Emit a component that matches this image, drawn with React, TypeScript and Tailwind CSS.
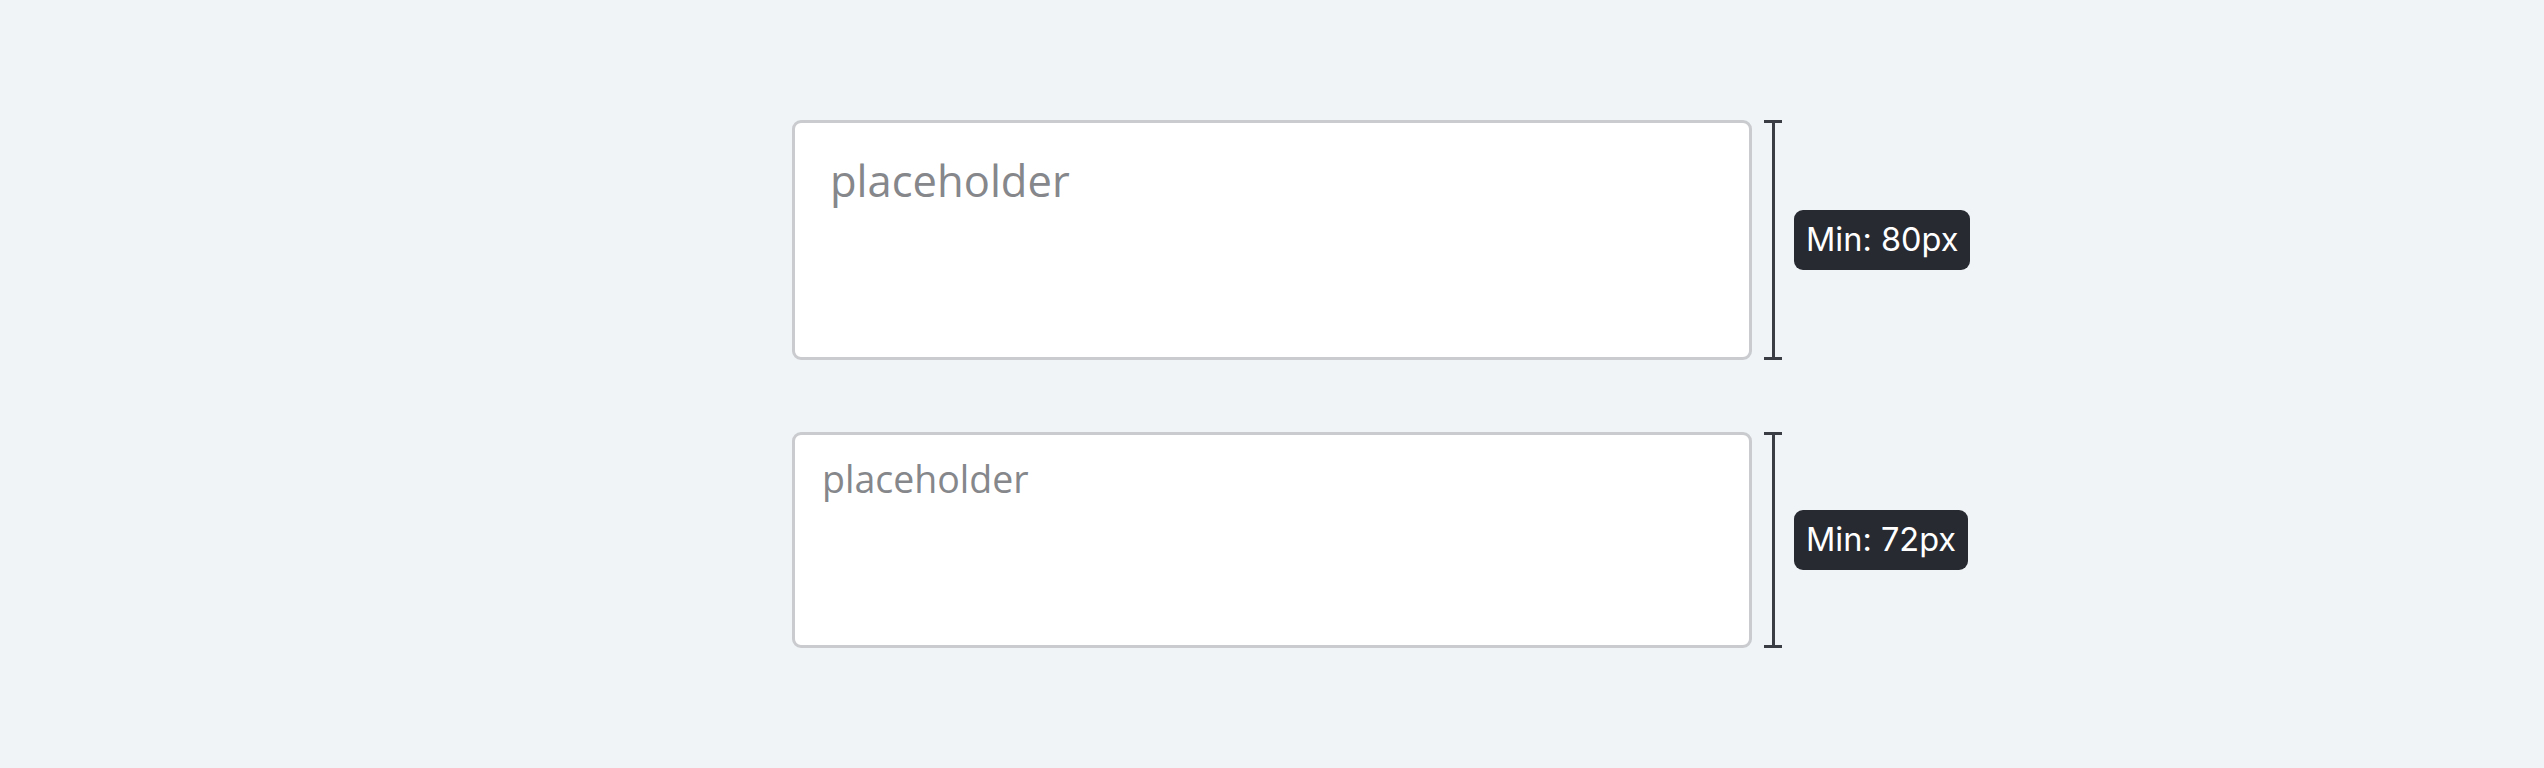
import React from "react"

// Textarea min-height demo — two sizes with a height ruler beside each
function Ruler({ label }: { label: string }) {
  return (
    <div className="absolute left-full top-0 bottom-0 ml-[12px] flex items-center gap-[12px]">
      <div className="h-full w-[18px] flex flex-col items-center">
        <div className="h-[3px] w-[18px] bg-[#3a3d44]" />
        <div className="flex-1 w-[3px] bg-[#3a3d44]" />
        <div className="h-[3px] w-[18px] bg-[#3a3d44]" />
      </div>
      <span className="whitespace-nowrap rounded-[9px] bg-[#272a31] px-[12px] h-[60px] flex items-center text-[32.5px] text-white font-['Inter',sans-serif]">
        {label}
      </span>
    </div>
  )
}

export default function App() {
  return (
    <div className="min-h-screen w-full bg-[#f1f4f7] flex flex-col items-center justify-center gap-[72px]">
      <div className="relative w-[960px]">
        <textarea
          placeholder="placeholder"
          className="block w-full h-[240px] resize-none rounded-[9px] border-[3px] border-[#c9cbcf] bg-white px-[35px] pt-[25px] text-[43.5px] leading-[1.5] text-[#333] placeholder:text-[#85878b] font-['Open_Sans',sans-serif] outline-none"
        />
        <Ruler label="Min: 80px" />
      </div>
      <div className="relative w-[960px]">
        <textarea
          placeholder="placeholder"
          className="block w-full h-[216px] resize-none rounded-[9px] border-[3px] border-[#c9cbcf] bg-white px-[27px] pt-[16px] text-[37.5px] leading-[1.5] text-[#333] placeholder:text-[#85878b] font-['Open_Sans',sans-serif] outline-none"
        />
        <Ruler label="Min: 72px" />
      </div>
    </div>
  )
}
